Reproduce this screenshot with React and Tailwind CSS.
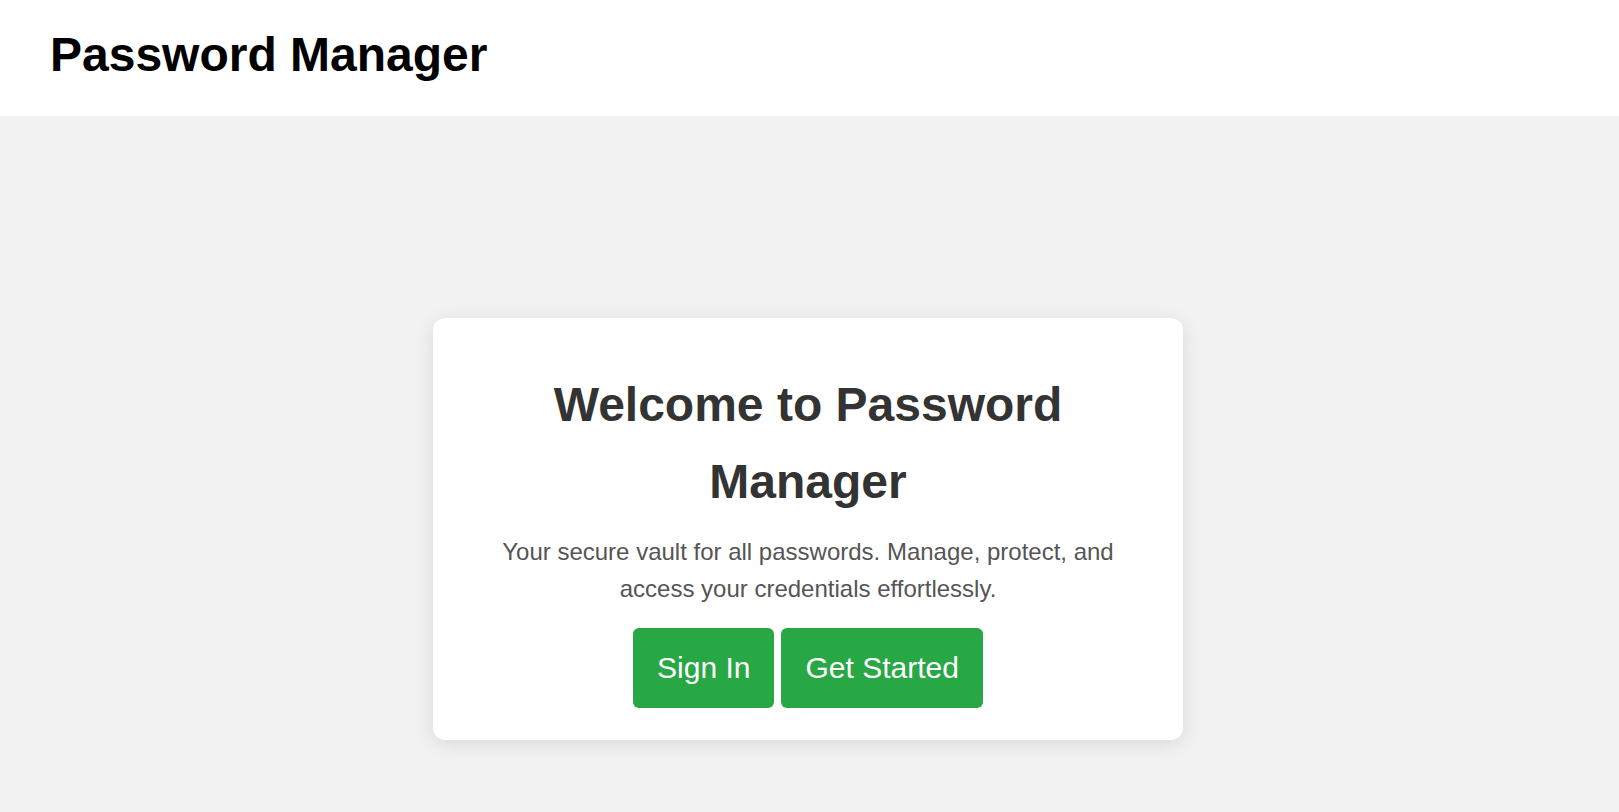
export default function App() {
  return (
    <div className="min-h-screen bg-[#f2f2f2] font-['Liberation_Sans',Arial,sans-serif]">
      {/* Top bar */}
      <header className="h-[116px] bg-white pl-[50px] pt-[27px]">
        <h1 className="text-[48px] leading-[55px] font-bold text-black">Password Manager</h1>
      </header>

      {/* Hero card */}
      <main className="flex justify-center pt-[202px] pb-16 pr-[3px]">
        <div className="w-[750px] bg-white rounded-xl shadow-[0_4px_20px_rgba(0,0,0,0.1)] px-10 pt-[48px] pb-[32px] text-center">
          <h2 className="text-[48px] leading-[77px] font-bold text-[#333]">
            Welcome to Password Manager
          </h2>
          <p className="mt-[13px] text-[24px] leading-[37px] text-[#555]">
            Your secure vault for all passwords. Manage, protect, and access your credentials effortlessly.
          </p>
          <div className="mt-[21px] flex justify-center gap-[7px]">
            <button className="bg-[#28a745] text-white text-[30px] leading-[32px] px-6 py-6 rounded-md border-none cursor-pointer">
              Sign In
            </button>
            <button className="bg-[#28a745] text-white text-[30px] leading-[32px] px-6 py-6 rounded-md border-none cursor-pointer">
              Get Started
            </button>
          </div>
        </div>
      </main>
    </div>
  );
}
